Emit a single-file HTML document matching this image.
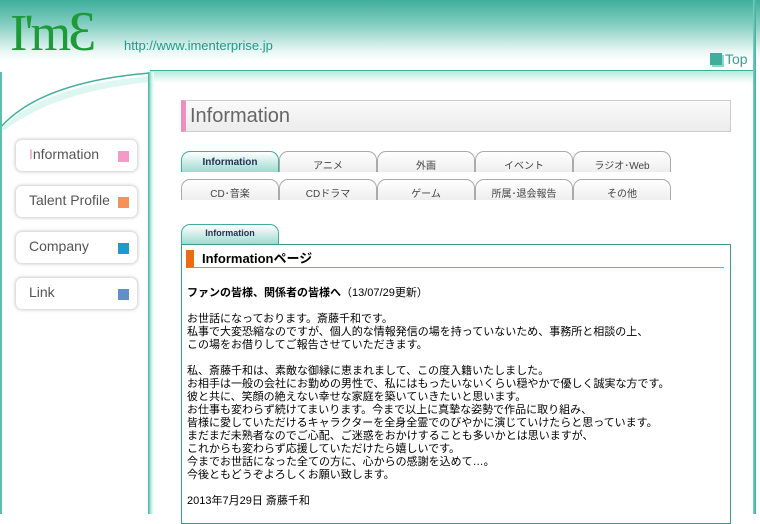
<!DOCTYPE html>
<html><head><meta charset="utf-8"><style>
*{margin:0;padding:0;box-sizing:border-box}
body{width:760px;height:514px;overflow:hidden;background:#fff;font-family:"Liberation Sans","Noto Sans CJK JP",sans-serif;position:relative}
.hdr{position:absolute;left:0;top:0;width:760px;height:72px;background:linear-gradient(#3fae9c 0%,#86cfc2 35%,#e6f6f2 70%,#fff 85%)}
.hline{position:absolute;left:150px;top:70px;width:605px;height:1px;background:#3fae9c}
.hglow{position:absolute;left:150px;top:71px;width:605px;height:12px;background:linear-gradient(#b5ebdd,#fff)}
.lborder{position:absolute;left:0;top:72px;width:2px;height:442px;background:#5fbfad}
.rborder{position:absolute;left:753px;top:0;width:3px;height:514px;background:linear-gradient(90deg,#7fd0c0,#3fae9c)}
.mid{position:absolute;left:148px;top:72px;width:6px;height:442px;background:linear-gradient(90deg,#3fae9c,#b8eee0,#fff)}
.logo{position:absolute;left:10px;top:4px;font-family:"Liberation Serif",serif;font-size:52px;color:#1f9a3a;letter-spacing:-3px;line-height:56px}
.url{position:absolute;left:124px;top:38px;font-size:13px;color:#1e9a8a}
.top{position:absolute;left:710px;top:51px;font-size:14px;color:#3a9f91}
.top i{display:inline-block;width:12px;height:12px;background:#3fae9c;margin-right:3px;vertical-align:-1px;box-shadow:2px 2px 0 #8fd7c9}
.nav{position:absolute;left:16px;width:121px;height:31px;border-radius:6px;background:#fff;box-shadow:0 0 3px 1px #ccc;font-size:14px;color:#555;padding:6px 0 0 13px}
.nav i{position:absolute;right:8px;top:11px;width:11px;height:11px}
.ttl{position:absolute;left:181px;top:100px;width:550px;height:32px;border:1px solid #ccc;border-left:5px solid #ef8fc0;background:linear-gradient(#fafafa,#ececec);font-size:20px;color:#666;padding:4px 0 0 4px}
.tab{position:absolute;width:98px;height:21px;border:1px solid #aaa;border-bottom:none;border-radius:9px 9px 0 0;background:linear-gradient(#fff,#eee);font-size:10px;text-align:center;padding-top:5px;color:#444}
.tab.on{background:linear-gradient(#fff,#9fdad0);border-color:#3fae9c;color:#235;font-weight:bold}
.box{position:absolute;left:181px;top:244px;width:550px;height:280px;border:1px solid #3a9a90}
.h{position:absolute;left:186px;top:250px;width:538px;height:18px;border-bottom:1px solid #e08a3a;border-left:8px solid #f06a10;padding-left:8px;font-size:13px;font-weight:bold;line-height:17px}
.txt{position:absolute;left:187px;top:287px;font-size:11px;line-height:13px;color:#000;white-space:pre}
</style></head><body>
<div class="hdr"></div>
<div class="logo">I'm<span style="font-size:56px">&#400;</span></div>
<div class="url">http://www.imenterprise.jp</div>
<div class="top"><i></i>Top</div>
<div class="hline"></div><div class="hglow"></div>
<svg style="position:absolute;left:0;top:70px" width="152" height="60"><path d="M0 58 Q40 12 150 3 L150 0 L0 0Z" fill="#fff"/><path d="M0 58 Q40 12 150 3" stroke="#3fae9c" fill="none" stroke-width="1.5"/><path d="M0 60 Q40 16 150 6 L150 12 Q50 22 0 64Z" fill="#c8f0e6" opacity=".6"/></svg>
<div class="lborder"></div><div class="mid"></div><div class="rborder"></div>
<div class="nav" style="top:140px"><span style="color:#ef8fc0">I</span>nformation<i style="background:#f59ac8"></i></div>
<div class="nav" style="top:186px">Talent Profile<i style="background:#f6915a"></i></div>
<div class="nav" style="top:232px">Company<i style="background:#1a9ccc"></i></div>
<div class="nav" style="top:278px">Link<i style="background:#5f8fcc"></i></div>
<div class="ttl">Information</div>
<div class="tab on" style="left:181px;top:151px">Information</div>
<div class="tab" style="left:279px;top:151px">アニメ</div>
<div class="tab" style="left:377px;top:151px">外画</div>
<div class="tab" style="left:475px;top:151px">イベント</div>
<div class="tab" style="left:573px;top:151px">ラジオ･Web</div>
<div class="tab" style="left:181px;top:179px">CD･音楽</div>
<div class="tab" style="left:279px;top:179px">CDドラマ</div>
<div class="tab" style="left:377px;top:179px">ゲーム</div>
<div class="tab" style="left:475px;top:179px">所属･退会報告</div>
<div class="tab" style="left:573px;top:179px">その他</div>
<div class="tab on" style="left:181px;top:224px;height:20px;font-size:9px;padding-top:3px">Information</div>
<div class="box"></div>
<div class="h">Informationページ</div>
<div class="txt"><b>ファンの皆様、関係者の皆様へ</b>（13/07/29更新）

お世話になっております。斎藤千和です。
私事で大変恐縮なのですが、個人的な情報発信の場を持っていないため、事務所と相談の上、
この場をお借りしてご報告させていただきます。

私、斎藤千和は、素敵な御縁に恵まれまして、この度入籍いたしました。
お相手は一般の会社にお勤めの男性で、私にはもったいないくらい穏やかで優しく誠実な方です。
彼と共に、笑顔の絶えない幸せな家庭を築いていきたいと思います。
お仕事も変わらず続けてまいります。今まで以上に真摯な姿勢で作品に取り組み、
皆様に愛していただけるキャラクターを全身全霊でのびやかに演じていけたらと思っています。
まだまだ未熟者なのでご心配、ご迷惑をおかけすることも多いかとは思いますが、
これからも変わらず応援していただけたら嬉しいです。
今までお世話になった全ての方に、心からの感謝を込めて…。
今後ともどうぞよろしくお願い致します。

2013年7月29日 斎藤千和</div>
</body></html>
